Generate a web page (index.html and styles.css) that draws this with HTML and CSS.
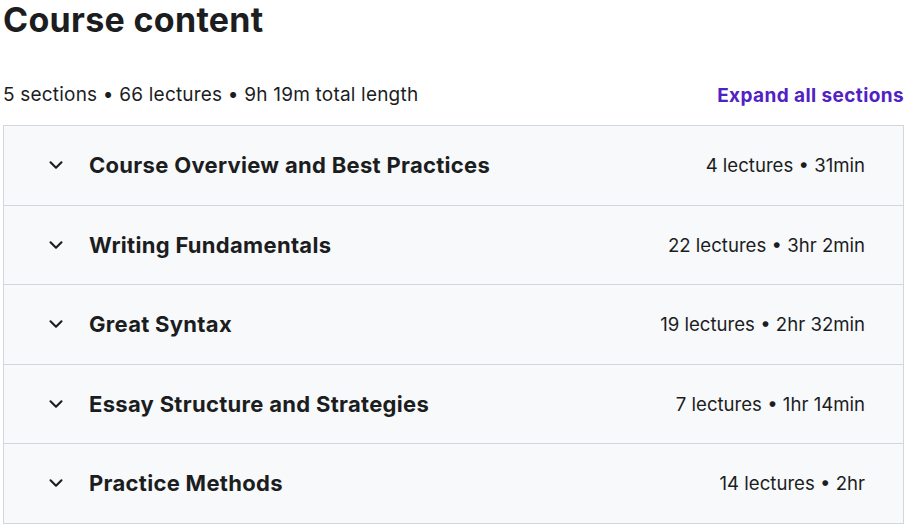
FILE: index.html
```html
<!DOCTYPE html>
<html lang="en">
<head>
    <meta charset="UTF-8">
    <meta name="viewport" content="width=device-width, initial-scale=1.0">
    <title>Course content</title>
    <link rel="stylesheet" href="styles.css">
</head>
<body>
    <div class="container">
        <h2 class="title">Course content</h2>

        <div class="summary">
            <span class="stats">5 sections • 66 lectures • 9h 19m total length</span>
            <a class="expand" href="#">Expand all sections</a>
        </div>

        <div class="sections">
            <div class="section-row">
                <svg class="chevron" viewBox="0 0 24 24"><path d="M6 9l6 6 6-6"/></svg>
                <span class="section-title">Course Overview and Best Practices</span>
                <span class="section-meta">4 lectures • 31min</span>
            </div>
            <div class="section-row">
                <svg class="chevron" viewBox="0 0 24 24"><path d="M6 9l6 6 6-6"/></svg>
                <span class="section-title">Writing Fundamentals</span>
                <span class="section-meta">22 lectures • 3hr 2min</span>
            </div>
            <div class="section-row">
                <svg class="chevron" viewBox="0 0 24 24"><path d="M6 9l6 6 6-6"/></svg>
                <span class="section-title">Great Syntax</span>
                <span class="section-meta">19 lectures • 2hr 32min</span>
            </div>
            <div class="section-row">
                <svg class="chevron" viewBox="0 0 24 24"><path d="M6 9l6 6 6-6"/></svg>
                <span class="section-title">Essay Structure and Strategies</span>
                <span class="section-meta">7 lectures • 1hr 14min</span>
            </div>
            <div class="section-row">
                <svg class="chevron" viewBox="0 0 24 24"><path d="M6 9l6 6 6-6"/></svg>
                <span class="section-title">Practice Methods</span>
                <span class="section-meta">14 lectures • 2hr</span>
            </div>
        </div>
    </div>
</body>
</html>
```

FILE: styles.css
```css
body {
    margin: 0;
    font-family: 'Inter', 'Liberation Sans', sans-serif;
    color: #1c1d1f;
    background-color: #fff;
}
.container {
    padding: 0 2px 0 3px;
}
.title {
    margin: 0;
    font-size: 34px;
    font-weight: 700;
    line-height: 40px;
    letter-spacing: 0.3px;
}
.summary {
    display: flex;
    justify-content: space-between;
    align-items: center;
    margin-top: 40px;
    margin-bottom: 15px;
}
.stats {
    font-size: 19px;
    line-height: 30px;
    letter-spacing: 0.2px;
}
.expand {
    color: #5022c3;
    font-weight: 700;
    font-size: 19px;
    letter-spacing: 0.4px;
    text-decoration: none;
}
.sections {
    border: 1px solid #d1d7dc;
    border-bottom: none;
}
.section-row {
    display: flex;
    align-items: center;
    height: 78.5px;
    padding: 0 38px 0 41px;
    background-color: #f7f9fa;
    border-bottom: 1px solid #d1d7dc;
}
.chevron {
    width: 22px;
    height: 22px;
    fill: none;
    stroke: #1c1d1f;
    stroke-width: 2.3;
    stroke-linecap: round;
    stroke-linejoin: round;
    margin-right: 22px;
}
.section-title {
    flex: 1;
    font-size: 22px;
    font-weight: 700;
    letter-spacing: 0.3px;
}
.section-meta {
    font-size: 18.6px;
}
```
